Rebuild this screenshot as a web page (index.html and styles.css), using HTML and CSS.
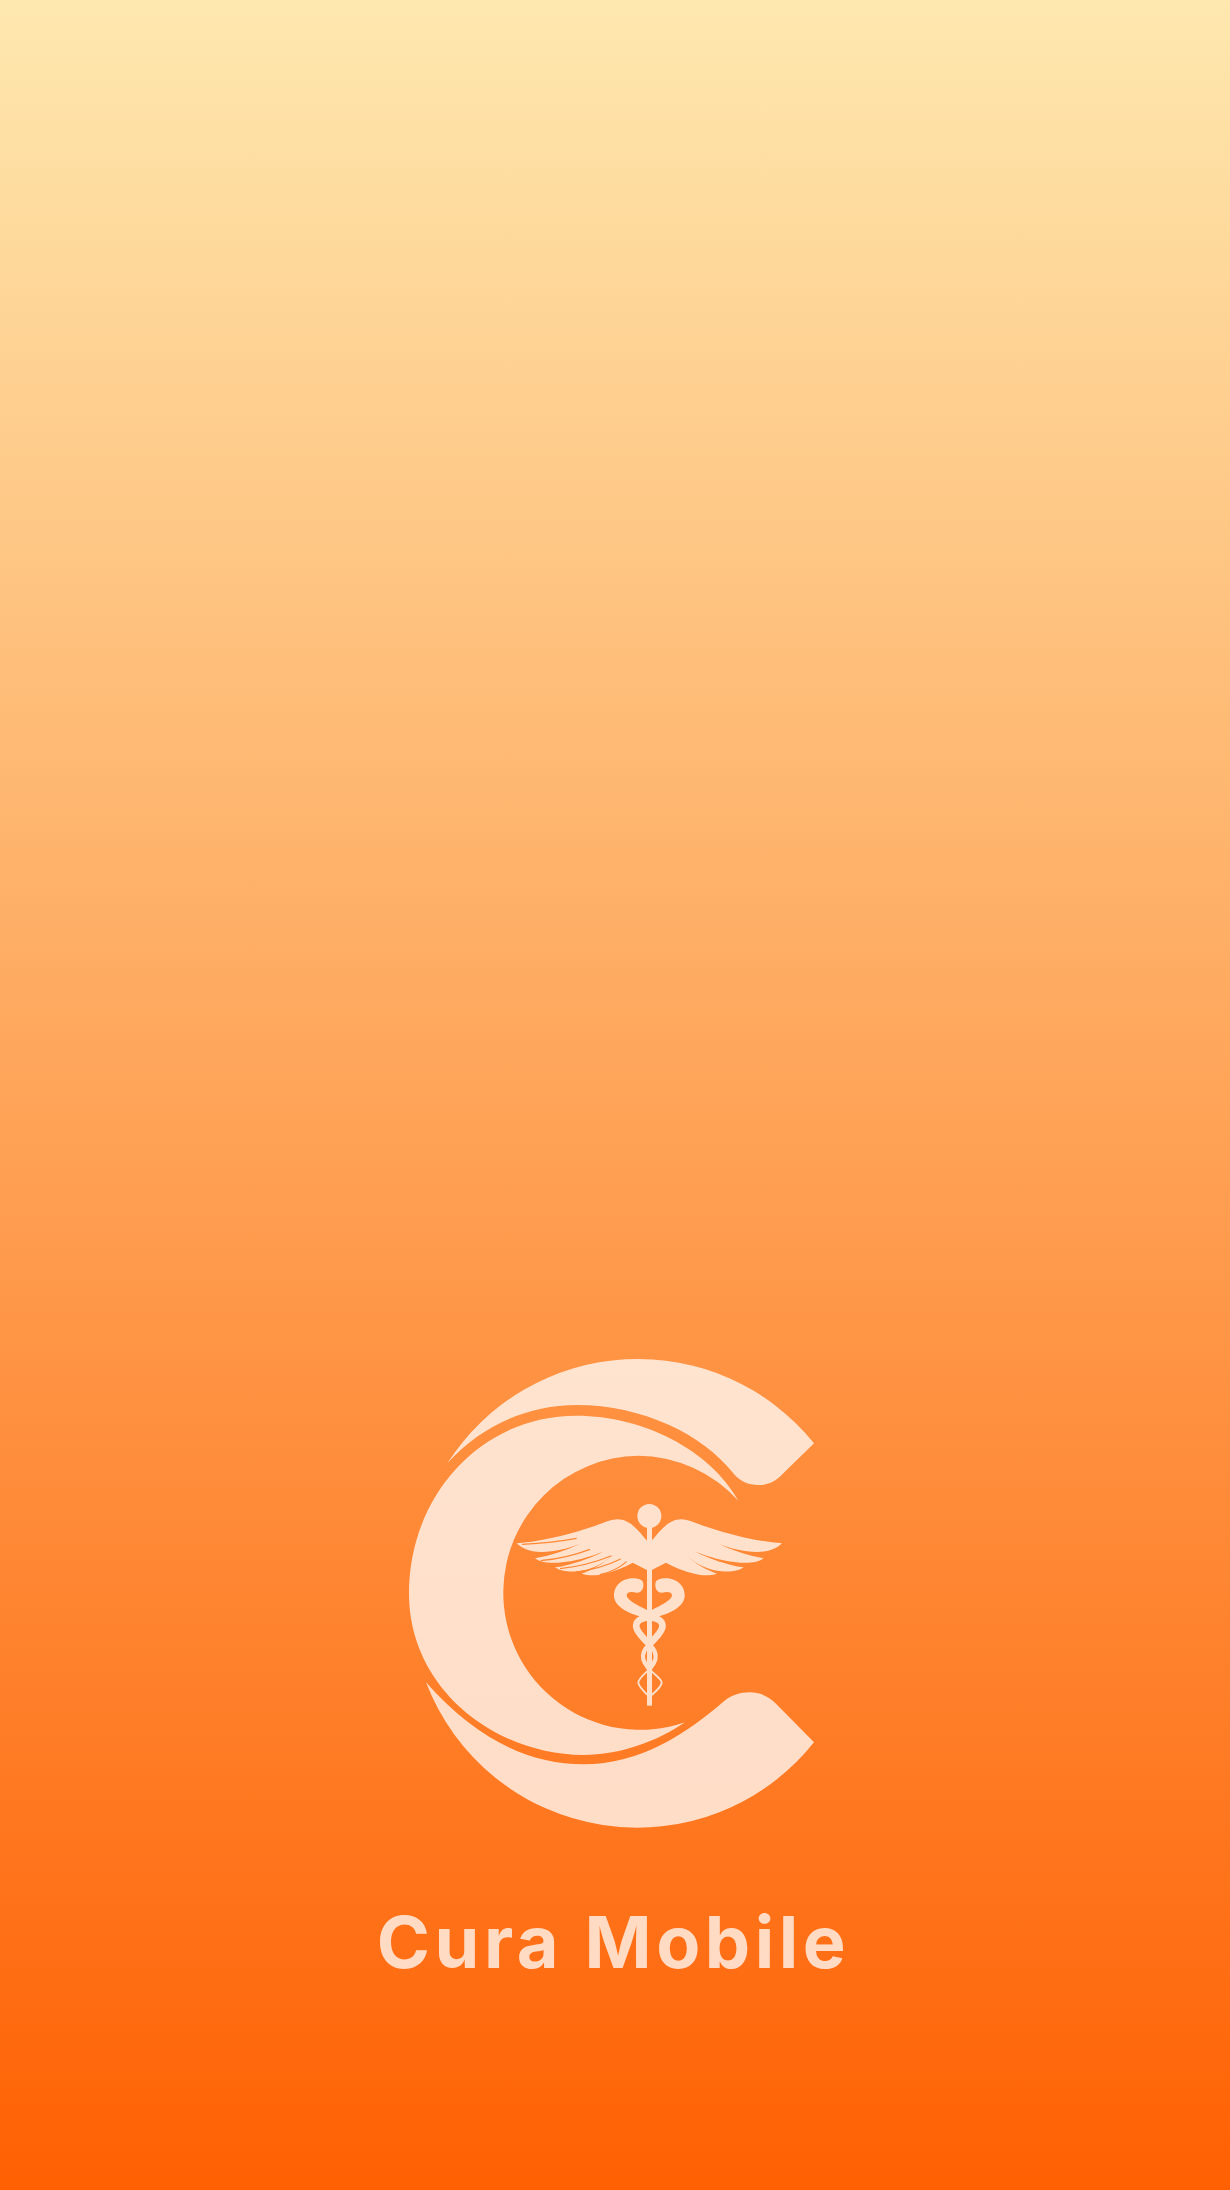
FILE: index.html
```html
<!DOCTYPE html>
<html lang="en">
<head>
<meta charset="utf-8">
<title>Cura Mobile</title>
<link rel="stylesheet" href="styles.css">
</head>
<body>
<main class="splash">
  <svg class="logo" viewBox="0 0 1320 1500" width="440" height="500" aria-label="Cura Mobile logo">
    <defs>
      <mask id="slits" maskUnits="userSpaceOnUse" x="0" y="0" width="900" height="700">
        <rect x="0" y="0" width="900" height="700" fill="#fff"/>
        <g class="slit">
          <path d="M66 163C120 160 175 155 230 145"/>
          <path d="M122 212C175 207 225 195 270 178"/>
          <path d="M180 236C235 230 290 215 335 197"/>
          <path d="M228 246C280 240 325 225 362 207"/>
          <path d="M300 254C330 248 360 232 380 215"/>
        </g>
      </mask>
      <path id="wing" d="M441 152C420 130 395 88 352 88C330 88 300 105 230 125C170 142 110 155 50 160C62 172 85 186 125 186C165 186 205 175 240 162C195 182 150 197 105 205C118 216 145 220 175 218C225 214 270 200 310 185C265 207 215 225 165 232C180 243 205 246 230 244C270 240 305 225 335 197C310 222 275 240 245 251C265 257 290 257 310 252C345 243 375 232 398 218L448 244L448 152Z"/>
    </defs>
    <g class="mark">
      <path d="M172 370A678 678 0 0 1 1272 310L1180 400C1155 427 1130 436 1105 435C1075 435 1050 425 1030 400C940 285 760 195 560 195C410 195 270 260 172 370Z"/>
      <path d="M1045 482C960 330 760 227 560 227C270 227 57 470 57 760C57 1050 320 1245 580 1245C690 1245 800 1205 885 1147A411 411 0 0 1 340 750A411 411 0 0 1 745 347A411 411 0 0 1 1045 482Z"/>
      <path d="M108 1027C260 1200 420 1273 580 1273C750 1273 890 1180 1000 1085C1025 1065 1050 1057 1078 1057C1105 1057 1130 1065 1155 1088L1272 1207A678 678 0 0 1 108 1027Z"/>
      <g transform="translate(330 450)">
        <circle cx="448" cy="78" r="36"/>
        <rect x="441" y="110" width="15" height="537"/>
        <g mask="url(#slits)">
          <use href="#wing"/>
          <use href="#wing" transform="translate(896 0) scale(-1 1)"/>
        </g>
        <path d="M430 282C430 266 405 263 385 266C355 272 340 295 342 320C345 350 385 372 441 384L441 360C410 345 380 330 380 316C380 305 395 305 410 308C424 309 431 296 430 282Z"/>
        <path d="M466 282C466 266 491 263 511 266C541 272 556 295 554 320C551 350 511 372 455 384L455 360C486 345 516 330 516 316C516 305 501 305 486 308C472 309 465 296 466 282Z"/>
        <g class="strand thick">
          <path d="M448 382C476 384 490 395 487 412C482 432 460 448 448 464"/>
          <path d="M448 382C420 384 406 395 409 412C414 432 436 448 448 464"/>
        </g>
        <g class="strand mid">
          <path d="M448 464C432 478 426 492 430 508C434 522 442 530 448 538"/>
          <path d="M448 464C464 478 470 492 466 508C462 522 454 530 448 538"/>
        </g>
        <g class="strand thin">
          <path d="M448 538C430 555 414 568 415 578C416 592 438 610 452 624"/>
          <path d="M448 538C466 555 486 568 485 578C484 592 462 610 444 624"/>
        </g>
      </g>
    </g>
  </svg>
  <h1 class="title">Cura Mobile</h1>
</main>
</body>
</html>
```
FILE: styles.css
```css
html, body {
  margin: 0;
  padding: 0;
}

.splash {
  height: 2190px;
  box-sizing: border-box;
  display: flex;
  flex-direction: column;
  align-items: center;
  justify-content: flex-end;
  padding-bottom: 204px;
  background: linear-gradient(180deg, #fee8af 0%, #ff6002 100%);
}

.logo {
  display: block;
  margin-left: -10px;
  margin-bottom: 58px;
}

.mark {
  fill: #fff;
  opacity: 0.75;
}

.slit path {
  fill: none;
  stroke: #000;
  stroke-width: 3.5;
}

.strand path {
  fill: none;
  stroke: #fff;
}

.thick path {
  stroke-width: 20;
}

.mid path {
  stroke-width: 13;
}

.thin path {
  stroke-width: 5.5;
}

.title {
  margin: 0 3px 0 0;
  font-family: "Inter", "Liberation Sans", sans-serif;
  font-weight: 700;
  font-size: 72px;
  line-height: 88px;
  letter-spacing: 4.5px;
  color: rgba(255, 255, 255, 0.75);
  white-space: nowrap;
}
```
